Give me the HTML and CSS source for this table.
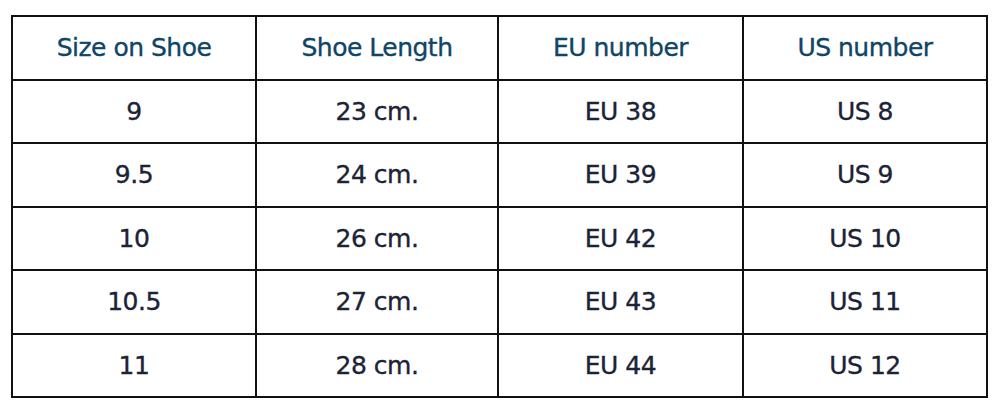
FILE: index.html
```html
<!DOCTYPE html>
<html>
<head>
<meta charset="utf-8">
<link rel="stylesheet" href="styles.css">
</head>
<body>
<table class="size-table">
  <colgroup>
    <col class="c1"><col class="c2"><col class="c3"><col class="c4">
  </colgroup>
  <thead>
    <tr><th>Size on Shoe</th><th>Shoe Length</th><th>EU number</th><th>US number</th></tr>
  </thead>
  <tbody>
    <tr><td>9</td><td>23 cm.</td><td>EU 38</td><td>US 8</td></tr>
    <tr><td>9.5</td><td>24 cm.</td><td>EU 39</td><td>US 9</td></tr>
    <tr><td>10</td><td>26 cm.</td><td>EU 42</td><td>US 10</td></tr>
    <tr><td>10.5</td><td>27 cm.</td><td>EU 43</td><td>US 11</td></tr>
    <tr><td>11</td><td>28 cm.</td><td>EU 44</td><td>US 12</td></tr>
  </tbody>
</table>
</body>
</html>
```
FILE: styles.css
```css
html, body {
  margin: 0;
  padding: 0;
  background: #ffffff;
}
body {
  padding: 15px 0 0 11px;
  font-family: "DejaVu Sans", Verdana, sans-serif;
}
.size-table {
  border-collapse: collapse;
  table-layout: fixed;
  width: 977px;
}
.c1 { width: 244px; }
.c2 { width: 242px; }
.c3 { width: 245px; }
.c4 { width: 244px; }
.size-table th,
.size-table td {
  border: 2px solid #111111;
  height: 61.5px;
  padding: 0;
  text-align: center;
  vertical-align: middle;
  font-size: 25px;
  font-weight: normal;
  letter-spacing: -0.5px;
  -webkit-text-stroke: 0.35px currentColor;
}
.size-table th {
  color: #0f4566;
}
.size-table td {
  color: #1c2336;
}
```
